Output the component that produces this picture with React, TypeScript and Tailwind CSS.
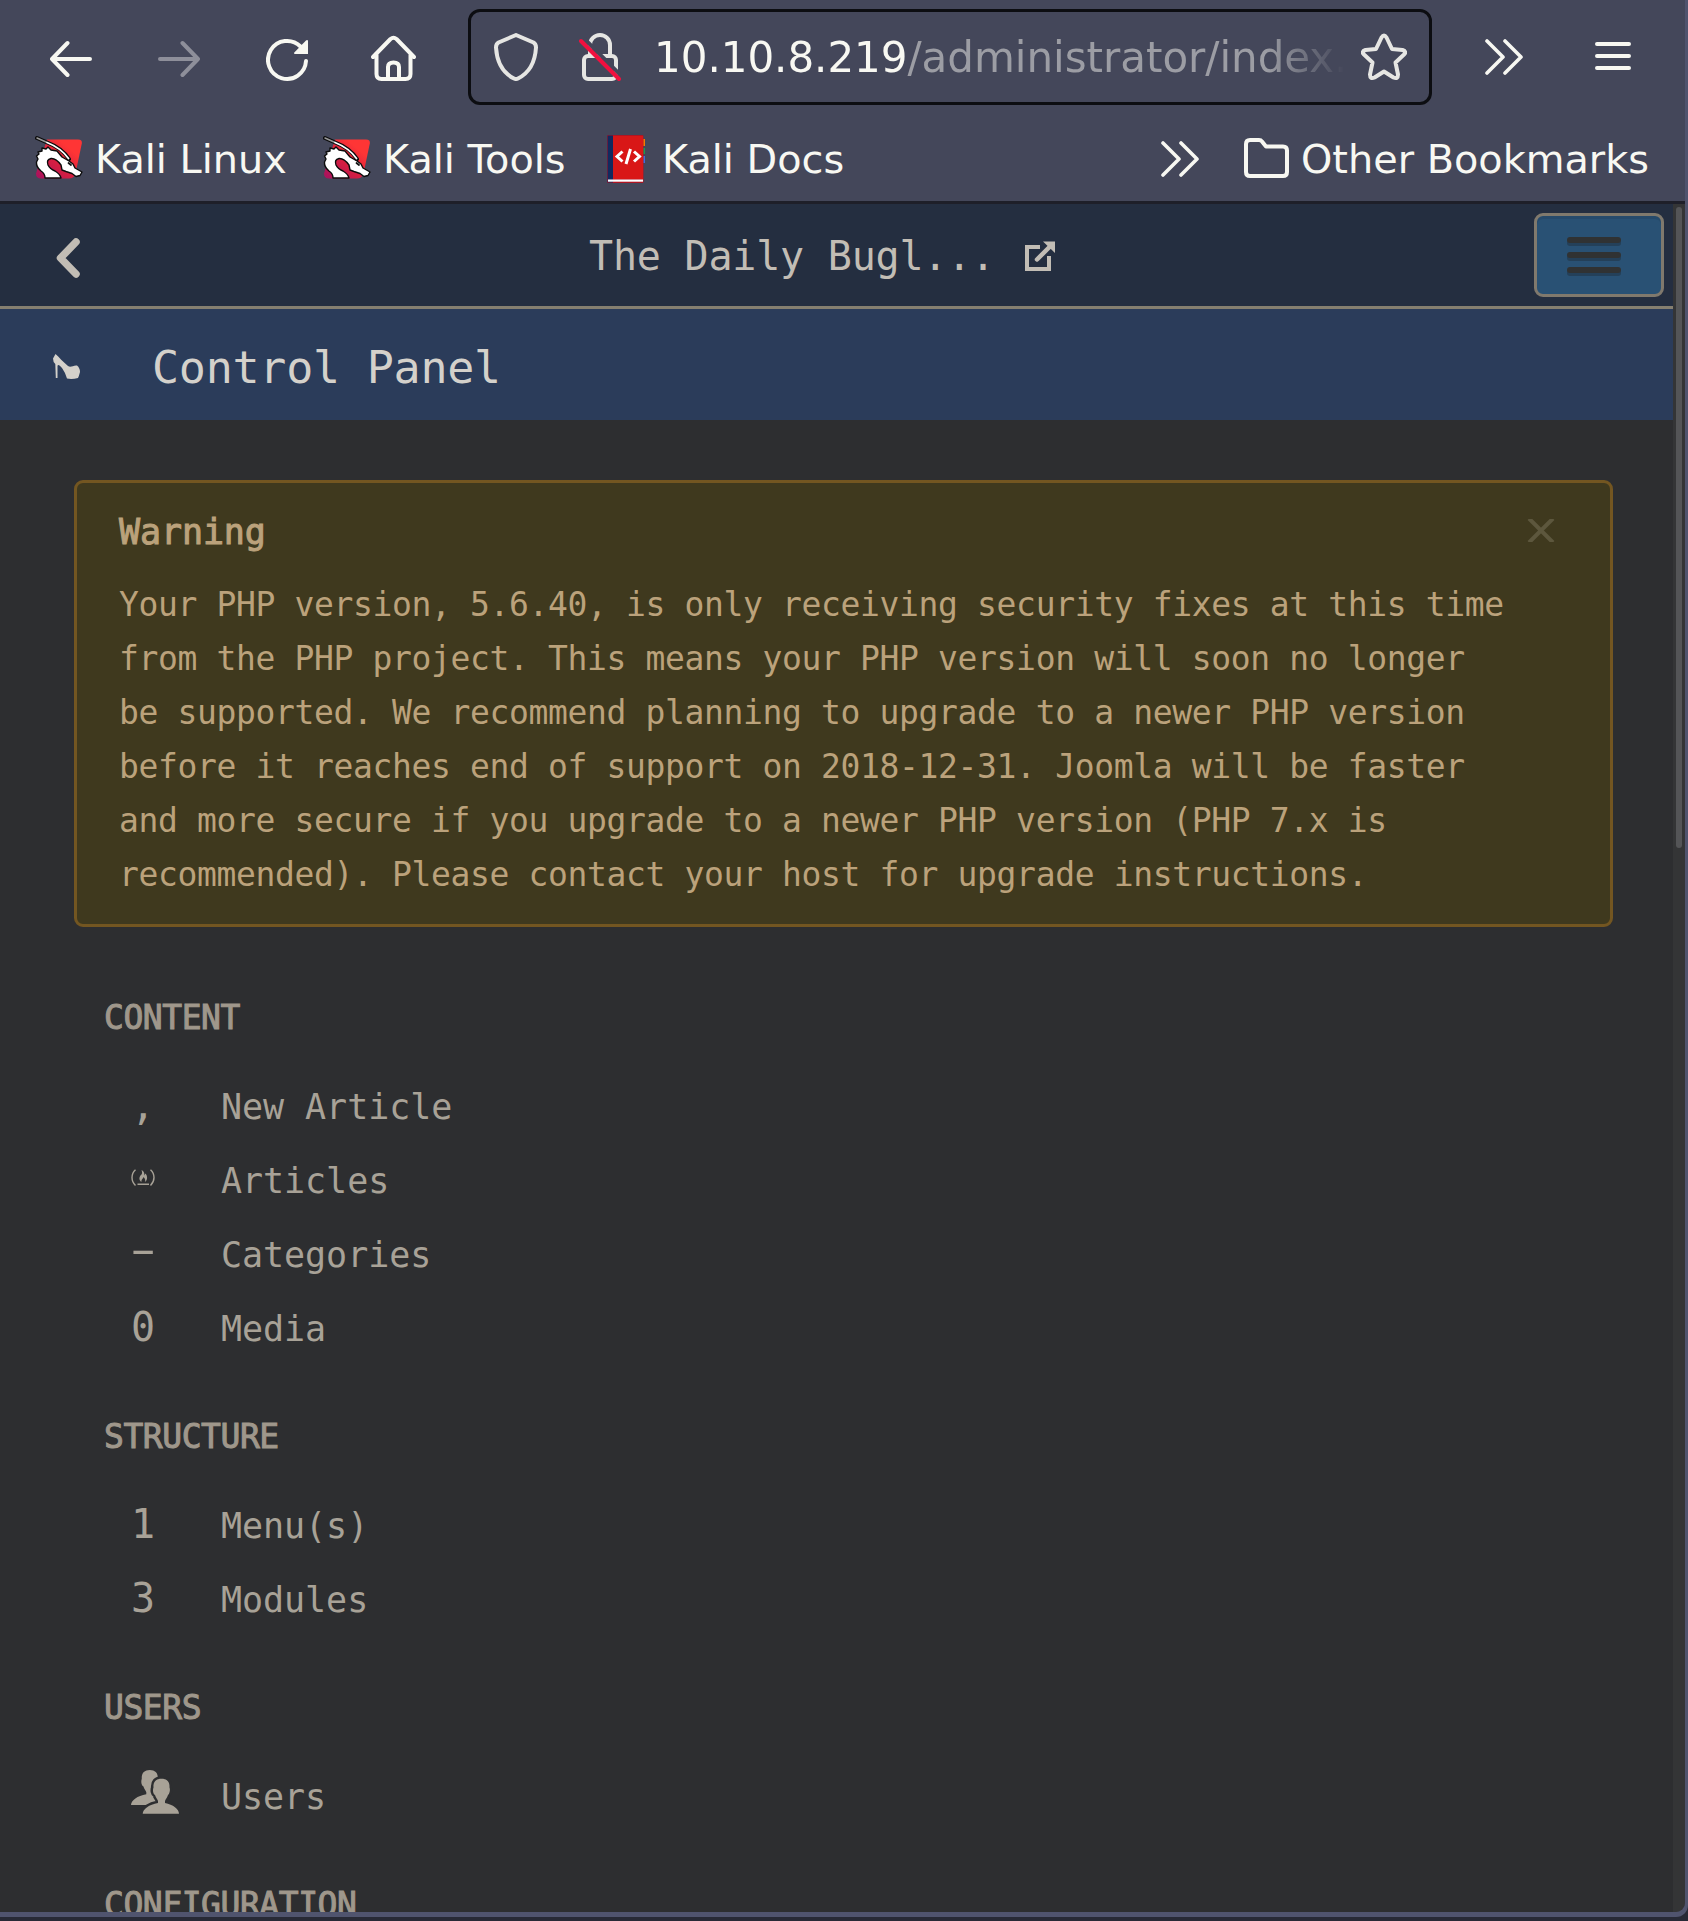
import React from "react";

type IconProps = { w: number; className?: string; children: React.ReactNode };

function Icon({ w, className = "", children }: IconProps) {
  return (
    <svg
      width={w}
      height={48}
      viewBox={`0 0 ${w} 48`}
      fill="none"
      stroke="currentColor"
      strokeWidth={4}
      strokeLinecap="round"
      strokeLinejoin="round"
      className={`shrink-0 ${className}`}
    >
      {children}
    </svg>
  );
}

function DoubleChevron({ className }: { className?: string }) {
  return (
    <Icon w={38} className={className}>
      <path d="M2 8L18 24L2 40M20 8L36 24L20 40" strokeWidth={3.6} />
    </Icon>
  );
}

function KaliLogo() {
  return (
    <svg width={48} height={48} viewBox="0 0 48 48" className="shrink-0">
      <defs>
        <linearGradient id="kali" x1="0" y1="1" x2="1" y2="0">
          <stop offset="0" stopColor="#a5105f" />
          <stop offset="0.45" stopColor="#d9203f" />
          <stop offset="0.75" stopColor="#ff3535" />
          <stop offset="1" stopColor="#ff3535" />
        </linearGradient>
      </defs>
      <path d="M12 4.500H43Q47.500 4.500 46.800 8.500L40.500 38.500Q39 43.500 34 43.500H6Q1 43.500 1 38.500Z" fill="url(#kali)" />
      <path
        d="M1.500 21L4 19L3 17L7 16L7 13L11 14L13 12L16 15L22 16L27 22L34 26L38 29L40 33L47 37L45 40.500L41 41.500L37 38.500L31 36.500L27 35L26 30Q21 23 16 23.500Q11 24.500 13 30Q15 34 20 36Q25 39 26 43H10Q10 38.500 6 36Q1 32 1.500 27L3 24Z"
        fill="#fff"
        stroke="#0b0b0b"
        strokeWidth={1.4}
        strokeLinejoin="round"
      />
      <path d="M2 3L11 7Q27 13 34 24" fill="none" stroke="#0b0b0b" strokeWidth={4} strokeLinecap="round" />
      <path d="M2 3L11 7" fill="none" stroke="#999" strokeWidth={1.5} strokeLinecap="round" />
      <path d="M12 7.500Q26 13 33.500 23.500" fill="none" stroke="#fff" strokeWidth={1.800} strokeLinecap="round" />
      <path d="M33.500 28L36 30" stroke="#111" strokeWidth={1.800} strokeLinecap="round" />
    </svg>
  );
}

function DocsLogo() {
  return (
    <svg width={38} height={48} viewBox="0 0 38 48" className="shrink-0">
      <rect x="34" y="4" width="4" height="7" fill="#f57c00" />
      <rect x="34" y="13" width="4" height="6" fill="#169c55" />
      <rect x="34" y="21" width="4" height="7" fill="#3b6fe0" />
      <rect x="0" y="0" width="36.500" height="48" rx="1" fill="#b01522" />
      <rect x="6" y="1" width="30" height="43" fill="#d91717" />
      <rect x="0.500" y="0.500" width="5.500" height="47" fill="#12295e" />
      <rect x="1" y="44.500" width="35" height="2.200" fill="#fff" />
      <path
        d="M15.500 16.500L10 21.500L15.500 26.500M27 16.500L32.500 21.500L27 26.500M23.500 14L19 29"
        fill="none"
        stroke="#fff"
        strokeWidth={3}
      />
    </svg>
  );
}

function Toolbar() {
  return (
    <div className="flex h-[105px] items-center pt-[9px] pl-[50px]">
      <Icon w={42}>
        <path d="M17.500 10L2 26L17.500 42M2 26H40" />
      </Icon>
      <Icon w={42} className="ml-[66px] text-[#8e8f9a]">
        <path d="M24.500 10L40 26L24.500 42M40 26H2" />
      </Icon>
      <Icon w={42} className="ml-[66px]">
        <path d="M40 28A19 19 0 1 1 34.500 13.500" />
        <path d="M42 7.500Q41 6.500 40 7.500L28.300 19.500Q27.500 21 29 21H42Z" fill="currentColor" stroke="none" />
      </Icon>
      <Icon w={45} className="ml-[63px]">
        <path d="M2 24L19.500 6Q22.500 3.500 25.500 6L43 24M5.500 22V41Q5.500 46 10.500 46H34.500Q39.500 46 39.500 41V22M17 46V34Q17 29.500 22.500 29.500Q28 29.500 28 34V46" />
      </Icon>
      <div className="ml-[52px] flex h-[96px] w-[964px] shrink-0 items-center rounded-[12px] border-3 border-[#0c0d11] pl-[23px]">
        <Icon w={44} className="text-[#e6e6e3]">
          <path d="M22 2L39.500 9.500Q42 11 42 14.500C41 31 35 40 24 45.500Q22 46.500 20 45.500C9 40 3 31 2 14.500Q2 11 4.500 9.500Z" />
        </Icon>
        <Icon w={42} className="ml-[41px] text-[#e6e6e3]">
          <path d="M11 23V12A10 10 0 0 1 31 12V23" />
          <rect x="5" y="23" width="32" height="23" rx="4" />
          <path d="M5 5.500L42 42.500" stroke="#44475a" strokeWidth={4} strokeLinecap="butt" />
          <path d="M2 8L40 46" stroke="#f1103f" />
        </Icon>
        <div className="mt-[2px] ml-[33px] w-[691px] shrink-0 overflow-hidden whitespace-nowrap text-[42px] leading-[60px] tracking-[-0.030px] [mask-image:linear-gradient(to_right,black_612px,transparent_691px)]">
          <span>10.10.8.219</span>
          <span className="text-[#9c9da4]">/administrator/index.</span>
        </div>
        <Icon w={48} className="ml-[15px] text-[#e6e6e3]">
          <path d="M21.500 4.500Q24 0.500 26.500 4.500L32 16L42.500 17Q47 18.500 44 21.500L35.500 29.500L38 41.500Q38 46.500 33.500 44.500L24 38.500L14.500 44.500Q10 46.500 10 41.500L12.500 29.500L4 21.500Q1 18.500 5.500 17L16 16Z" />
        </Icon>
      </div>
      <DoubleChevron className="ml-[53px]" />
      <Icon w={36} className="ml-[72px]">
        <path d="M2 11H34M2 23H34M2 35H34" />
      </Icon>
    </div>
  );
}

function Bookmarks() {
  return (
    <div className="mt-[12px] flex h-[84px] items-center pl-[35px] text-[39.800px] leading-[48px] whitespace-nowrap">
      <div className="flex w-[288px] items-center gap-[12px]">
        <KaliLogo />
        <span>Kali Linux</span>
      </div>
      <div className="flex w-[284px] items-center gap-[12px]">
        <KaliLogo />
        <span>Kali Tools</span>
      </div>
      <div className="flex w-[554px] items-center gap-[17px]">
        <DocsLogo />
        <span>Kali Docs</span>
      </div>
      <DoubleChevron />
      <Icon w={45} className="ml-[45px]">
        <path d="M2 9Q2 5 6 5H15Q17 5 18 6.500L22 11.500H39Q43 11.500 43 15.500V37Q43 41 39 41H6Q2 41 2 37Z" />
      </Icon>
      <span className="ml-[12px]">Other Bookmarks</span>
    </div>
  );
}

function FireIcon() {
  return (
    <svg width={24} height={18} viewBox="0 0 24 18" fill="none" stroke="currentColor" strokeWidth={1.4}>
      <path d="M4.500 0.700Q1 4 1 8.500T4.500 16.500M19.500 0.700Q23 4 23 8.500T19.500 16.500M6.500 15.300H18" />
      <path
        d="M10.500 13C7.500 11 8 7.500 10.500 5.500C11.500 4 11 2.500 10.500 1C13 2 13.800 4.500 13.200 6.500L14.500 4.500C16.500 7 17 11 13.800 13C15 10.500 13.500 9.500 12.500 8C12 10 10 10.500 10.500 13Z"
        fill="currentColor"
        stroke="none"
      />
    </svg>
  );
}

function UsersIcon() {
  const person =
    "M30.500 8.700C36 8.700 39 12 38.500 17.500C39.500 20 38.500 24 37 25C36 28 34.500 29.500 34 31V33C42 34.500 48 39 48 43.700H11.700C12 39 18 34.500 27 33V31C26.500 29 25 28 24 25C22 24 21.500 20 22.500 17.500C22 12 25 8.700 30.500 8.700Z";
  return (
    <svg width={49} height={44} viewBox="0 0 49 44" className="shrink-0" fill="currentColor">
      <path d={person} transform="translate(-11.700 -8.700)" />
      <path d={person} stroke="#2d2e30" strokeWidth={5} />
      <path d={person} />
    </svg>
  );
}

const glyph = "-mt-[4px] w-[24px] text-center text-[40px]";

const sections: { title: string; items: { icon: React.ReactNode; label: string }[] }[] = [
  {
    title: "CONTENT",
    items: [
      { icon: <span className={glyph}>,</span>, label: "New Article" },
      { icon: <span className="-mt-[6px]"><FireIcon /></span>, label: "Articles" },
      { icon: <span className="-mt-[11px] w-[24px] scale-x-[1.900] text-center text-[40px]">-</span>, label: "Categories" },
      { icon: <span className={glyph}>0</span>, label: "Media" },
    ],
  },
  {
    title: "STRUCTURE",
    items: [
      { icon: <span className={glyph}>1</span>, label: "Menu(s)" },
      { icon: <span className={glyph}>3</span>, label: "Modules" },
    ],
  },
  { title: "USERS", items: [{ icon: <span className="-mt-[10px]"><UsersIcon /></span>, label: "Users" }] },
  { title: "CONFIGURATION", items: [] },
];

const warning = [
  "Your PHP version, 5.6.40, is only receiving security fixes at this time",
  "from the PHP project. This means your PHP version will soon no longer",
  "be supported. We recommend planning to upgrade to a newer PHP version",
  "before it reaches end of support on 2018-12-31. Joomla will be faster",
  "and more secure if you upgrade to a newer PHP version (PHP 7.x is",
  "recommended). Please contact your host for upgrade instructions.",
];

function Page() {
  return (
    <div className="h-full w-[1673px] overflow-hidden bg-[#2d2e30] font-['DejaVu_Sans_Mono',monospace]">
      <div className="flex h-[105px] items-center border-b-3 border-[#857f70] bg-[#242e40] pl-[56px] text-[#c2bdb5]">
        <svg width={24} height={40} viewBox="0 0 24 40" className="mt-[6px]" fill="none" stroke="currentColor" strokeWidth={7.500} strokeLinecap="round" strokeLinejoin="round">
          <path d="M20 4L4.500 20L20 36" />
        </svg>
        <span className="mt-[2px] ml-[509px] w-[410px] whitespace-pre text-[40px] leading-[50px] tracking-[-0.200px]">The Daily Bugl...</span>
        <svg width={31} height={30} viewBox="0 0 31 30" className="mt-[2px] ml-[26px]" fill="none" stroke="currentColor">
          <path d="M15 6H2V28H24V15" strokeWidth={4} />
          <path d="M12 18.500L25 5.500" strokeWidth={4.500} strokeLinecap="round" />
          <path d="M18 0.500H30V12Z" fill="currentColor" stroke="none" />
        </svg>
        <div className="ml-[478px] flex h-[84px] w-[130px] flex-col gap-[9px] rounded-[9px] border-3 border-[#80796d] bg-[#295174] pt-[21px] pl-[30px] shadow-[inset_0_3px_0_#264a6b]">
          <div className="h-[6px] w-[54px] rounded-[3px] bg-[#303233] shadow-[0_3px_0_rgba(32,48,62,0.5)]" />
          <div className="h-[6px] w-[54px] rounded-[3px] bg-[#303233] shadow-[0_3px_0_rgba(32,48,62,0.5)]" />
          <div className="h-[6px] w-[54px] rounded-[3px] bg-[#303233] shadow-[0_3px_0_rgba(32,48,62,0.5)]" />
        </div>
      </div>
      <div className="flex h-[111px] items-center bg-[#2b3c5a] pt-[6px] pl-[53px] text-[#d4d1cb]">
        <svg width={27} height={25} viewBox="0 0 27 25" className="-mt-[3px]" fill="currentColor">
          <path d="M2.500 0C6 3 10 8 15 12C18 14 20 11 24 11.500Q27 14 27 18Q26 22 25 24Q19 25.500 14 24.500Q12 18 9 14Q5 9 4.500 12V24H2.800L2.300 10Q0 8 0 4.500Z" />
        </svg>
        <span className="ml-[72px] text-[45px] leading-[56px] tracking-[-0.250px]">Control Panel</span>
      </div>
      <div className="mt-[60px] ml-[74px] h-[447px] w-[1539px] rounded-[9px] border-3 border-[#735621] bg-[#3f391e] pt-[25px] pr-[55px] pl-[42px] text-[#bba27b]">
        <div className="flex h-[48px] items-center justify-between">
          <span className="text-[35px] leading-[48px] tracking-[-0.100px] [-webkit-text-stroke:1px_#bba27b]">Warning</span>
          <svg width={28} height={23} viewBox="0 0 28 23" className="-mt-[3px]" fill="none" stroke="#5d573d" strokeWidth={4}>
            <path d="M2 -0.500L26 23.500M26 -0.500L2 23.500" />
          </svg>
        </div>
        <div className="mt-[22px] text-[33px] leading-[54px] tracking-[-0.365px] whitespace-nowrap">
          {warning.map((line) => (
            <p key={line}>{line}</p>
          ))}
        </div>
      </div>
      <div className="mt-[71px] flex flex-col gap-[51px] pl-[104px] text-[#a8a297]">
        {sections.map((s) => (
          <section key={s.title}>
            <h2 className="mb-[32px] text-[33px] leading-[40px] tracking-[-0.450px] text-[#9f978b] [-webkit-text-stroke:1px_#9f978b]">
              {s.title}
            </h2>
            {s.items.map((it) => (
              <div key={it.label} className="flex h-[74px] items-center pl-[27px] text-[35px] tracking-[-0.050px]">
                <div className="flex w-[90px] items-center">{it.icon}</div>
                <span>{it.label}</span>
              </div>
            ))}
          </section>
        ))}
      </div>
    </div>
  );
}

export default function App() {
  return (
    <div className="h-[1921px] w-[1688px] overflow-hidden bg-[#282a36]">
      <div className="h-[1917px] w-[1688px] overflow-hidden rounded-br-[12px] bg-[#50546e] pr-[3px] pb-[5px]">
        <div className="flex h-full w-full flex-col overflow-hidden rounded-br-[9px] bg-[#44475a] font-['DejaVu_Sans',sans-serif] text-[#f8f8f2]">
          <Toolbar />
          <Bookmarks />
          <div className="flex min-h-0 flex-1 flex-col border-t-3 border-[#1e1f29]">
            <div className="flex min-h-0 flex-1">
              <Page />
              <div className="w-[12px] bg-[#343536] pt-[3px] pl-[3px]">
                <div className="h-[641px] w-[6px] rounded-[3px] bg-[#545557]" />
              </div>
            </div>
          </div>
        </div>
      </div>
    </div>
  );
}
